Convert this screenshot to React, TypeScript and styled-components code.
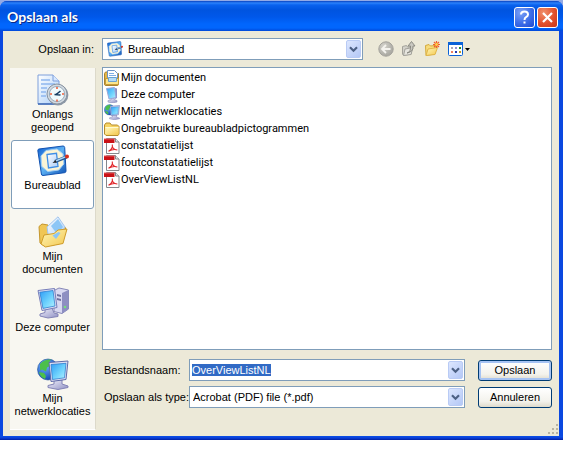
import React, { useEffect, useRef } from 'react';
import styled, { createGlobalStyle, css } from 'styled-components';

const uiFont = '"Liberation Sans", Arial, sans-serif';
const listFont = 'Roboto, Tahoma, sans-serif';

const GlobalStyle = createGlobalStyle`
  * { box-sizing: border-box; }
  body {
    margin: 0;
    background: #fff;
    color: #000;
    font: 11px/13px ${uiFont};
  }
  button, input, select { font: inherit; color: inherit; margin: 0; }
`;

const Page = styled.main`
  display: flex;
  min-height: 100vh;
  padding: 0 17px 12px 0;
`;

const Backdrop = styled.div`
  flex: 1;
  display: flex;
  min-width: 0;
  padding-top: 1px;
  background: #93aae6;
`;

const Dialog = styled.section`
  flex: 1;
  display: flex;
  flex-direction: column;
  min-width: 0;
  border-radius: 7px 7px 0 0;
  background: #0a48e0;
  overflow: hidden;
`;

const TitleBar = styled.header`
  display: flex;
  align-items: center;
  gap: 2px;
  height: 30px;
  padding: 2px 5px 0 7px;
  background: linear-gradient(#0842c0 0, #2b82fb 2px, #0a62ee 4px, #0054e0 9px, #0058ea 16px, #0166fd 23px, #0166fd 27px, #0048d8 30px);
`;

const Title = styled.h1`
  flex: 1;
  margin: 0;
  font: bold 14px/16px Lato, "Trebuchet MS", sans-serif;
  color: #fff;
  text-shadow: 1px 1px 0 #0a2a86;
`;

const CaptionButton = styled.button<{ $danger?: boolean }>`
  display: grid;
  place-items: center;
  width: 21px;
  height: 21px;
  padding: 0;
  border: 1px solid #fff;
  border-radius: 3px;
  color: #fff;
  background: ${p => p.$danger
    ? 'radial-gradient(circle at 30% 25%, #f0906c, #e2502c 55%, #c5361a)'
    : 'radial-gradient(circle at 30% 25%, #7ba0f6, #3c6de8 55%, #1f49d0)'};
`;

const Content = styled.div`
  position: relative;
  flex: 1;
  display: flex;
  flex-direction: column;
  gap: 7px;
  margin: 0 4px 0 3px;
  padding: 7px 7px 6px;
  background: #ece9d8;
`;

const BottomEdge = styled.div`
  height: 4px;
  background: linear-gradient(#0a50e8, #0a3fd8 50%, #001ea0);
`;

const LocationRow = styled.div`
  display: grid;
  grid-template-columns: 86px minmax(0, 1fr);
  gap: 6px;
  align-items: center;
`;

const LocationLabel = styled.label`
  padding-right: 2px;
  text-align: right;
`;

const LocationTools = styled.div`
  display: flex;
  align-items: center;
  gap: 15px;
`;

const Combo = styled.div<{ $share?: string }>`
  display: flex;
  align-items: center;
  min-width: 0;
  width: ${p => p.$share ?? '100%'};
  height: 22px;
  padding: 1px;
  border: 1px solid #7f9db9;
  background: #fff;
`;

const ComboIcon = styled.span`
  display: flex;
  margin-left: 3px;
`;

const fieldText = css`
  flex: 1;
  min-width: 0;
  height: 18px;
  padding: 0 2px;
  border: 0;
  outline: 0;
  background: transparent;
`;

const Select = styled.select<{ $afterIcon?: boolean }>`
  ${fieldText}
  appearance: none;
  ${p => p.$afterIcon && css`padding-left: 5px;`}
`;

const TextInput = styled.input`
  ${fieldText}
  padding: 0 1px;
  &::selection { color: #fff; background: #316ac5; }
`;

const dropFace = css`
  display: grid;
  place-items: center;
  flex: none;
  width: 15px;
  height: 18px;
  padding: 0;
  border: 1px solid #b9cbf5;
  border-radius: 2px;
  background: linear-gradient(135deg, #dce6fe, #b4c8f6);
`;

const DropFace = styled.span`
  ${dropFace}
  pointer-events: none;
`;

const DropButton = styled.button`
  ${dropFace}
`;

const ToolGroup = styled.div`
  display: flex;
  gap: 7px;
`;

const ToolButton = styled.button`
  display: flex;
  align-items: center;
  height: 16px;
  padding: 0;
  border: 0;
  background: none;
`;

const Main = styled.div`
  flex: 1;
  display: grid;
  grid-template-columns: 86px minmax(0, 1fr);
  gap: 6px;
`;

const Places = styled.nav`
  display: flex;
  flex-direction: column;
  gap: 2px;
  margin-top: 1px;
  padding: 1px;
  border-right: 1px solid #dcd9ca;
  border-bottom: 1px solid #fff;
  background: #f8f7f1;
`;

const Place = styled.button<{ $active?: boolean }>`
  display: flex;
  flex-direction: column;
  align-items: center;
  gap: 2px;
  height: 69px;
  padding: 4px 0 0;
  border: 1px solid ${p => (p.$active ? '#7f9db9' : 'transparent')};
  border-radius: 3px;
  background: ${p => (p.$active ? '#fff' : 'transparent')};
  line-height: 13px;
  white-space: pre-line;
`;

const Files = styled.div`
  display: flex;
  flex-direction: column;
  gap: 9px;
  padding-bottom: 22px;
`;

const FileList = styled.ul`
  flex: 1;
  margin: 0;
  padding: 1px;
  border: 1px solid #7f9db9;
  background: #fff;
  list-style: none;
  font: 11px/17px ${listFont};
`;

const FileRow = styled.li`
  display: flex;
  align-items: center;
  gap: 1px;
  height: 17px;
`;

const Form = styled.form`
  display: grid;
  grid-template-columns: 85px minmax(0, 1fr) 74px;
  gap: 5px 0;
  align-items: center;
  padding-left: 2px;
`;

const FieldLabel = styled.label`
  white-space: nowrap;
`;

const ActionButton = styled.button<{ $primary?: boolean }>`
  height: 21px;
  padding: 0;
  border: 1px solid #003c74;
  border-radius: 3px;
  background: linear-gradient(#fff, #f3f2ec 70%, #dedacb);
  ${p => p.$primary && css`box-shadow: inset 0 0 0 2px #a6c3f3;`}
`;

const Field = styled.div`
  padding-right: 13px;
`;

const Grip = styled.svg`
  position: absolute;
  right: 0;
  bottom: 1px;
`;

const GradientSheet = styled.svg`
  display: block;
`;

type IconProps = { size?: number };

const Gradients = () => (
  <GradientSheet width="0" height="0" aria-hidden="true">
    <defs>
      <linearGradient id="screen" x1="0" y1="0" x2="1" y2="1">
        <stop offset="0" stopColor="#2f9cf5" /><stop offset=".55" stopColor="#6ed2fd" /><stop offset="1" stopColor="#b5f1ff" />
      </linearGradient>
      <linearGradient id="case" x1="0" y1="0" x2="1" y2="1">
        <stop offset="0" stopColor="#f2f2fc" /><stop offset="1" stopColor="#8f90c4" />
      </linearGradient>
      <linearGradient id="folder" x1="0" y1="0" x2="1" y2="1">
        <stop offset="0" stopColor="#fff7b8" /><stop offset="1" stopColor="#f3c750" />
      </linearGradient>
      <linearGradient id="paper" x1="0" y1="0" x2="1" y2="1">
        <stop offset="0" stopColor="#fff" /><stop offset="1" stopColor="#a9cdf8" />
      </linearGradient>
      <linearGradient id="desk" x1="0" y1="0" x2="1" y2="1">
        <stop offset="0" stopColor="#0f5fd0" /><stop offset=".5" stopColor="#5eb2f4" /><stop offset="1" stopColor="#0d51b4" />
      </linearGradient>
      <radialGradient id="globe" cx=".35" cy=".3" r=".8">
        <stop offset="0" stopColor="#71b5ff" /><stop offset="1" stopColor="#0a3eb0" />
      </radialGradient>
      <radialGradient id="grey" cx=".35" cy=".3" r=".8">
        <stop offset="0" stopColor="#d3d2cb" /><stop offset="1" stopColor="#a3a29b" />
      </radialGradient>
    </defs>
  </GradientSheet>
);

const RecentIcon = ({ size = 32 }: IconProps) => (
  <svg width={size} height={size} viewBox="0 0 32 32" aria-hidden="true">
    <path d="M1 1h15l6 6v23H1z" fill="url(#paper)" stroke="#7f9fda" />
    <path d="M16 1v6h6" fill="#d7e8ff" stroke="#7f9fda" />
    <path d="M4 6h9M4 10h14M4 14h6M4 18h5M4 22h5" stroke="#8fb6ee" strokeWidth="1.3" />
    <path d="M1 30h21" stroke="#3c68b5" strokeWidth="1.5" />
    <circle cx="21" cy="21" r="10.4" fill="#8d98a6" />
    <circle cx="20" cy="20" r="10" fill="#d3dae1" stroke="#8894a2" />
    <circle cx="20" cy="20" r="7.6" fill="#f1fafd" stroke="#9aacbc" />
    <path d="M18.5 21l5-4M17.5 20.5l6 .5" stroke="#163b60" strokeWidth="1.6" />
    <path d="M20 13v2M20 25.5v2M13 20h2M25 20h2" stroke="#f2603a" strokeWidth="1.6" />
  </svg>
);

const DesktopIcon = ({ size = 32 }: IconProps) => (
  <svg width={size} height={size} viewBox="0 0 32 32" aria-hidden="true">
    <path d="M2 4L26 1q1.5 0 1.7 1.5L29 26q0 1.5-1.5 1.7L6 30.5q-1.5 0-1.6-1.5L.8 5.5Q.8 4.2 2 4z" fill="url(#desk)" stroke="#1252b0" />
    <path d="M9 5.5L20 4l6 5 .8 10-5 6-11 1.5-6-5L4 11z" fill="#fbf5d6" stroke="#a6d0f4" />
    <path d="M10 9.5l9.5-1.2L21 21.5 11.5 23z" fill="url(#paper)" stroke="#3f8fe6" strokeWidth="1.3" />
    <path d="M18 16.5L29.5 12" stroke="#24558f" strokeWidth="3.4" />
    <path d="M18.5 16L29 11.7" stroke="#a9d6f8" strokeWidth="1.4" />
    <path d="M15.5 18l3-3 1.2 2.6z" fill="#222" />
    <circle cx="30" cy="11.5" r="2" fill="#d8301c" />
  </svg>
);

const DocumentsIcon = ({ size = 32 }: IconProps) => (
  <svg width={size} height={size} viewBox="0 0 32 32" aria-hidden="true">
    <path d="M2 10.5L5 8l6 1 3 4 14-2 1 3-4 13-17 3.5L3 27z" fill="#f0c655" stroke="#c4962e" />
    <path d="M10 11L21 .8 28 11l-8 12-9-5z" fill="url(#paper)" stroke="#a2c6ee" />
    <path d="M14 10l7-7 5 8-6 7z" fill="#8cc6f6" />
    <path d="M7 19l10-1.5 4-3.5 9-1-4 14.5L8.500 31 4 28z" fill="url(#folder)" stroke="#cf9c2b" />
    <path d="M15.500 19.500l6-3.500 2 1-4.500 6z" fill="#8cc6f6" />
  </svg>
);

const ComputerIcon = ({ size = 32 }: IconProps) => (
  <svg width={size} height={size} viewBox="0 0 32 32" aria-hidden="true">
    <path d="M17 3.5L22 1l9.500 2v19L25 26.500l-8-2z" fill="#d9d9f1" stroke="#8788b8" />
    <path d="M25 6l6.500-3v19L25 26.500z" fill="#8e8fc2" />
    <path d="M20 7l4 1v2l-4-1zM20 11l4 1v2l-4-1z" fill="#6f719f" />
    <circle cx="28" cy="20" r="1.3" fill="#74e07c" />
    <path d="M8 21h7l2 5 4 1v2.500L11 31l-8-2v-2l5-1.500z" fill="url(#case)" stroke="#8384b6" />
    <path d="M1 3.500L17.500 1.500 20 20.500 5 23.500z" fill="#dfe0f4" stroke="#767dba" />
    <path d="M2.800 5.200L16 3.500l2 15.500-12 2.400z" fill="url(#screen)" stroke="#2272c8" strokeWidth=".7" />
  </svg>
);

const NetworkIcon = ({ size = 32 }: IconProps) => (
  <svg width={size} height={size} viewBox="0 0 32 32" aria-hidden="true">
    <circle cx="11" cy="11.5" r="10.5" fill="url(#globe)" stroke="#1b4d9b" strokeWidth=".6" />
    <path d="M3 6q4-5 11-4.500l-2 3 2 3-4 2-1 4-4-2-2 1zM2 14l5 1 2 3-1 3q-5-2-6-7z" fill="#4cc04a" />
    <path d="M17 22h8v4l6 2v1.500L21 31.500 11 29.500v-2l6-1.500z" fill="url(#case)" stroke="#8384b6" />
    <path d="M12 4.500L31 3l-2 18.500L14 23.500z" fill="#dfe0f4" stroke="#5f6ba9" />
    <path d="M14 6.500L29 5.300l-1.500 14.500-12 1.700z" fill="url(#screen)" stroke="#2272c8" strokeWidth=".7" />
  </svg>
);

const MyDocumentsSmall = () => (
  <svg width="16" height="16" viewBox="0 0 16 16" aria-hidden="true">
    <path d="M.5 3.500l1-1.500h3l1 1.500h9V14q0 1.500-1.500 1.500H2Q.5 15.500.5 14z" fill="#e5b646" stroke="#a98432" />
    <path d="M3.500.5h7l3 3V10h-10z" fill="#fff" stroke="#6c94c7" />
    <path d="M5 3.500h5M5 5.500h7" stroke="#7fafe6" />
    <path d="M1.500 8.500h13v6h-13z" fill="#fbe58c" stroke="#c79c3a" />
    <path d="M4.500 7.500h8v4h-8z" fill="#b5dcf8" stroke="#6ba2d0" />
  </svg>
);

const ComputerSmall = () => (
  <svg width="16" height="16" viewBox="0 0 16 16" aria-hidden="true">
    <path d="M11 1l2 .5V11l-2 1z" fill="#8a90c4" />
    <path d="M7 11h3l1 2 2 .5v1.500l-5 1-4-1v-1.500l3-.5z" fill="url(#case)" stroke="#8a8bb8" strokeWidth=".6" />
    <path d="M2.500 1.500l8-1 1.500 10-7 1.500z" fill="url(#screen)" stroke="#9aa6d8" />
  </svg>
);

const FolderSmall = () => (
  <svg width="16" height="16" viewBox="0 0 16 16" aria-hidden="true">
    <path d="M.5 4L2 2h4l1.500 2h6L15 5.500V13l-1 1.500H2L.5 13z" fill="#f6d363" stroke="#b58c2c" />
    <path d="M1.500 6.500h13M2 6v7" stroke="#fffbd0" />
    <path d="M2.500 7h12v6.500h-12z" fill="url(#folder)" />
  </svg>
);

const PdfIcon = () => (
  <svg width="16" height="16" viewBox="0 0 16 16" aria-hidden="true">
    <path d="M2.500.5h9l3.500 3.500v11.500H2.500z" fill="#fff" stroke="#85888c" />
    <path d="M11.500.5V4H15" fill="#e2e5e8" stroke="#85888c" />
    <path d="M0 1h10.500v4H0z" fill="#c91217" />
    <path d="M0 1h10.500" stroke="#e8575a" />
    <path d="M4.500 13.300c3-1.500 4.200-4.500 3.800-6.800-.6 3 1.500 5.500 5 5.500-3-1-6-.2-8.800 1.300z" fill="none" stroke="#e0272b" strokeWidth="1.1" />
  </svg>
);

const BackIcon = () => (
  <svg width="16" height="16" viewBox="0 0 16 16" aria-hidden="true">
    <circle cx="8" cy="8" r="7.2" fill="url(#grey)" stroke="#a3a29b" />
    <path d="M12.500 8H5M8 4L4 8l4 4" fill="none" stroke="#f4f3ee" strokeWidth="1.8" />
  </svg>
);

const UpIcon = () => (
  <svg width="16" height="16" viewBox="0 0 16 16" aria-hidden="true">
    <path d="M1.500 5.500l4-1 1 1.500h4V13l-8 1.500-1-1.500z" fill="#d3d2ca" stroke="#a3a29a" />
    <path d="M2.500 14.500L4 8l8-1.500-2 7z" fill="#e6e5de" stroke="#a3a29a" />
    <path d="M6 12q4-1 3.500-7H7l3.500-4.500L14 5h-2q.5 6-6 7z" fill="#c9c8c0" stroke="#85847d" strokeWidth=".9" />
  </svg>
);

const NewFolderIcon = () => (
  <svg width="16" height="16" viewBox="0 0 16 16" aria-hidden="true">
    <path d="M1.500 4.500l3.500-1L6.500 5l4.500-.5V13L2 14.500z" fill="#f7dc7c" stroke="#d3a93d" />
    <path d="M2 14.500L4 8l9.500-1.500-2.500 7z" fill="url(#folder)" stroke="#dfb548" />
    <path d="M12.500 0v7M9 3.500h7M10 1l5 5M15 1l-5 5" stroke="#f0602a" strokeWidth="1.2" />
    <circle cx="12.5" cy="3.5" r="1.4" fill="#ffd04a" />
  </svg>
);

const ViewsIcon = () => (
  <svg width="23" height="16" viewBox="0 0 23 16" aria-hidden="true">
    <rect x="1.5" y="1.5" width="14" height="13" rx="1" fill="#fff" stroke="#0a62d8" />
    <path d="M1 1h15v3H1z" fill="#0a62d8" />
    <path d="M4 6h2v2H4z" fill="#a8a8b8" /><path d="M8 6h2v2H8z" fill="#8c8fd8" /><path d="M12 6h2v2h-2z" fill="#1c8a2c" />
    <path d="M4 10h2v2H4z" fill="#f08060" /><path d="M8 10h2v2H8z" fill="#2338b0" /><path d="M12 10h2v2h-2z" fill="#c09a20" />
    <path d="M18 7h5l-2.500 3z" fill="#000" />
  </svg>
);

const Chevron = () => (
  <svg width="9" height="7" viewBox="0 0 9 7" aria-hidden="true">
    <path d="M1 1.3l3.5 3.5L8 1.3" fill="none" stroke="#4d6185" strokeWidth="2.2" />
  </svg>
);

const places = [
  { label: 'Onlangs\ngeopend', icon: RecentIcon },
  { label: 'Bureaublad', icon: DesktopIcon, active: true },
  { label: 'Mijn\ndocumenten', icon: DocumentsIcon },
  { label: 'Deze computer', icon: ComputerIcon },
  { label: 'Mijn\nnetwerklocaties', icon: NetworkIcon },
];

const files = [
  { name: 'Mijn documenten', icon: <MyDocumentsSmall /> },
  { name: 'Deze computer', icon: <ComputerSmall /> },
  { name: 'Mijn netwerklocaties', icon: <NetworkIcon size={16} /> },
  { name: 'Ongebruikte bureaubladpictogrammen', icon: <FolderSmall /> },
  { name: 'constatatielijst', icon: <PdfIcon /> },
  { name: 'foutconstatatielijst', icon: <PdfIcon /> },
  { name: 'OverViewListNL', icon: <PdfIcon /> },
];

export default function App() {
  const nameRef = useRef<HTMLInputElement>(null);

  useEffect(() => {
    nameRef.current?.focus();
    nameRef.current?.select();
  }, []);

  return (
    <Page>
      <GlobalStyle />
      <Backdrop>
        <Dialog role="dialog" aria-labelledby="dialog-title">
          <Gradients />
          <TitleBar>
            <Title id="dialog-title">Opslaan als</Title>
            <CaptionButton type="button" aria-label="Help">
              <svg width="13" height="15" viewBox="0 0 13 15" aria-hidden="true">
                <path d="M3 4.5Q3 1.5 6.5 1.5T10 4.5Q10 6 8 7.2 6.5 8 6.5 10" fill="none" stroke="#fff" strokeWidth="2" />
                <path d="M5.500 11.500h2v2h-2z" fill="#fff" />
              </svg>
            </CaptionButton>
            <CaptionButton type="button" aria-label="Sluiten" $danger>
              <svg width="13" height="13" viewBox="0 0 13 13" aria-hidden="true">
                <path d="M2 2l9 9M11 2l-9 9" stroke="#fff" strokeWidth="2.2" />
              </svg>
            </CaptionButton>
          </TitleBar>
          <Content>
            <LocationRow>
              <LocationLabel htmlFor="location">Opslaan in:</LocationLabel>
              <LocationTools>
                <Combo $share="58%">
                  <ComboIcon><DesktopIcon size={16} /></ComboIcon>
                  <Select id="location" $afterIcon defaultValue="Bureaublad">
                    <option>Bureaublad</option>
                  </Select>
                  <DropFace><Chevron /></DropFace>
                </Combo>
                <ToolGroup>
                  <ToolButton type="button" aria-label="Vorige"><BackIcon /></ToolButton>
                  <ToolButton type="button" aria-label="Omhoog"><UpIcon /></ToolButton>
                  <ToolButton type="button" aria-label="Nieuwe map"><NewFolderIcon /></ToolButton>
                  <ToolButton type="button" aria-label="Weergave"><ViewsIcon /></ToolButton>
                </ToolGroup>
              </LocationTools>
            </LocationRow>
            <Main>
              <Places>
                {places.map(({ label, icon: Icon, active }) => (
                  <Place key={label} type="button" $active={active}>
                    <Icon />
                    <span>{label}</span>
                  </Place>
                ))}
              </Places>
              <Files>
                <FileList>
                  {files.map(file => (
                    <FileRow key={file.name}>{file.icon}<span>{file.name}</span></FileRow>
                  ))}
                </FileList>
                <Form onSubmit={event => event.preventDefault()}>
                  <FieldLabel htmlFor="file-name">Bestandsnaam:</FieldLabel>
                  <Field>
                    <Combo>
                      <TextInput id="file-name" ref={nameRef} defaultValue="OverViewListNL" />
                      <DropButton type="button" aria-label="Recente namen"><Chevron /></DropButton>
                    </Combo>
                  </Field>
                  <ActionButton type="submit" $primary>Opslaan</ActionButton>
                  <FieldLabel htmlFor="file-type">Opslaan als type:</FieldLabel>
                  <Field>
                    <Combo>
                      <Select id="file-type" defaultValue="pdf">
                        <option value="pdf">Acrobat (PDF) file (*.pdf)</option>
                      </Select>
                      <DropFace><Chevron /></DropFace>
                    </Combo>
                  </Field>
                  <ActionButton type="button">Annuleren</ActionButton>
                </Form>
              </Files>
            </Main>
            <Grip width="12" height="12" viewBox="0 0 12 12" aria-hidden="true">
              <path d="M9 1h2v2H9zM5 5h2v2H5zM9 5h2v2H9zM1 9h2v2H1zM5 9h2v2H5zM9 9h2v2H9z" fill="#b8b4a3" />
            </Grip>
          </Content>
          <BottomEdge />
        </Dialog>
      </Backdrop>
    </Page>
  );
}
